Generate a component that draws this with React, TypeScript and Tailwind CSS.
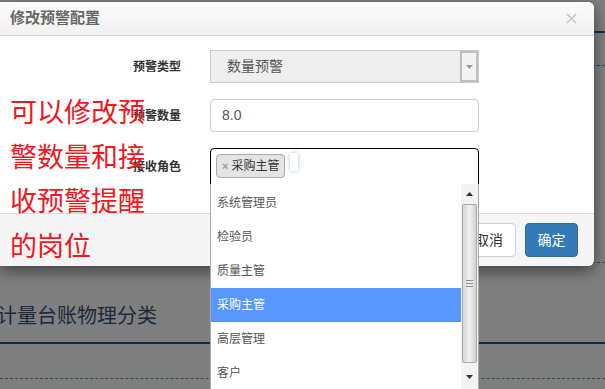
import React from 'react';

const roles = ['系统管理员', '检验员', '质量主管', '采购主管', '高层管理', '客户'];

const Tri = ({ down, color }: { down?: boolean; color: string }) => (
    <svg width="7" height="4" viewBox="0 0 7 4">
        <path d={down ? 'M0 0 L7 0 L3.5 4 Z' : 'M0 4 L7 4 L3.5 0 Z'} fill={color} />
    </svg>
);

export default function App() {
    return (
        <div className="relative w-[605px] h-[389px] overflow-hidden bg-[#7f7f7f] font-['Liberation_Sans','Noto_Sans_CJK_SC',sans-serif]">
            {/* page behind the backdrop */}
            <div className="flex flex-col">
                <div className="h-[31px]" />
                <div className="h-[2px] bg-[#14324f]" />
                <div className="mt-[32px] border-t border-dashed border-[#1f4a78]" />
                <div className="mt-[196px] border-t border-dashed border-[#1f4a78]" />
                <div className="mt-[39px] h-[28px] leading-[28px] ml-[-3px] text-[20px] text-[#1c2a39]">计量台账物理分类</div>
                <div className="mt-[12px] h-[2px] bg-[#0f2a45]" />
                <div className="mt-[34px] border-t border-dashed border-[#1f4a78]" />
            </div>

            {/* modal */}
            <div className="absolute left-0 top-[2px] w-[594px] bg-white rounded-r-[6px] shadow-[0_5px_15px_rgba(0,0,0,0.5)]">
                <div className="h-[34px] flex items-center justify-between pl-[10px] pr-[17px] border-b border-[#d2d2d2] bg-gradient-to-b from-[#fbfbfb] to-[#f1f1f1] rounded-tr-[6px]">
                    <span className="text-[15px] font-bold text-[#666]">修改预警配置</span>
                    <svg width="11" height="11" viewBox="0 0 11 11">
                        <path d="M1 1 L10 10 M10 1 L1 10" stroke="#c4c4c4" strokeWidth="1.4" />
                    </svg>
                </div>

                <div className="pt-[14px] pb-[28px] flex flex-col gap-[16px]">
                    <div className="flex items-center">
                        <label className="w-[181px] text-right text-[12px] font-bold text-[#333]">预警类型</label>
                        <div className="ml-[29px] w-[269px] h-[33px] flex bg-[#eee] border border-[#ccc]">
                            <span className="flex-1 pl-[16px] flex items-center text-[14px] text-[#555]">数量预警</span>
                            <span className="w-[18px] h-full flex items-center justify-center border-2 border-[#bfbfbf] bg-[#f3f3f3]">
                                <Tri down color="#9a9a9a" />
                            </span>
                        </div>
                    </div>

                    <div className="flex items-center">
                        <label className="w-[181px] text-right text-[12px] font-bold text-[#333]">预警数量</label>
                        <div className="ml-[29px] w-[269px] h-[33px] flex items-center pl-[11px] bg-white border border-[#ccc] rounded-[4px] text-[14px] text-[#555]">8.0</div>
                    </div>

                    <div className="flex items-center">
                        <label className="w-[181px] text-right text-[12px] font-bold text-[#333]">接收角色</label>
                        <div className="relative ml-[29px] w-[269px] h-[37px] flex items-start pt-[5px] pl-[5px] bg-white border border-black rounded-t-[4px]">
                            <span className="h-[24px] flex items-center px-[5px] border border-[#aaa] bg-[#e4e4e4] rounded-[4px] text-[12px] text-[#333]">
                                <span className="mr-[3px] text-[#999] font-bold text-[11px]">×</span>采购主管
                            </span>
                            <span className="ml-[5px] mt-[-1px] w-[8px] h-[18px] bg-white shadow-[0_0_4px_#9ecaed]" />

                            {/* dropdown list */}
                            <div className="absolute left-[-1px] top-full w-[269px] h-[206px] flex bg-white border border-t-0 border-[#aaa]">
                                <div className="flex-1 pt-[2px] flex flex-col">
                                    {roles.map(r => (
                                        <div
                                            key={r}
                                            className={
                                                r === '采购主管'
                                                    ? 'h-[34px] shrink-0 flex items-center pl-[6px] text-[12px] bg-[#5897fb] text-white'
                                                    : 'h-[34px] shrink-0 flex items-center pl-[6px] text-[12px] text-[#555]'
                                            }
                                        >
                                            {r}
                                        </div>
                                    ))}
                                </div>
                                <div className="w-[17px] flex flex-col items-center bg-[#f3f3f3]">
                                    <div className="h-[19px] flex items-center justify-center"><Tri color="#333" /></div>
                                    <div className="mt-[1px] w-[15px] h-[159px] flex flex-col items-center justify-center gap-[2px] border border-[#a9a9a9] rounded-[2px] bg-gradient-to-r from-[#d6d6d6] via-[#f2f2f2] to-[#d0d0d0]">
                                        <span className="w-[7px] h-px bg-[#8a8a8a]" />
                                        <span className="w-[7px] h-px bg-[#8a8a8a]" />
                                        <span className="w-[7px] h-px bg-[#8a8a8a]" />
                                    </div>
                                    <div className="mt-[5px] h-[17px] flex items-center justify-center"><Tri down color="#333" /></div>
                                </div>
                            </div>
                        </div>
                    </div>
                </div>

                <div className="h-[53px] flex justify-end items-start pt-[9px] pr-[16px] gap-[9px] border-t border-[#ddd] bg-[#f5f5f5] rounded-br-[6px]">
                    <button className="w-[54px] h-[34px] bg-white border border-[#ccc] rounded-[4px] text-[14px] text-[#333]">取消</button>
                    <button className="w-[53px] h-[34px] bg-[#337ab7] border border-[#2e6da4] rounded-[4px] text-[14px] text-white">确定</button>
                </div>
            </div>

            {/* red annotation */}
            <div className="absolute left-[10px] top-[89px] text-[27px] leading-[44.5px] text-[#f2161e] font-['Noto_Sans_CJK_SC',sans-serif]">
                <div>可以修改预</div>
                <div>警数量和接</div>
                <div>收预警提醒</div>
                <div>的岗位</div>
            </div>
        </div>
    );
}
